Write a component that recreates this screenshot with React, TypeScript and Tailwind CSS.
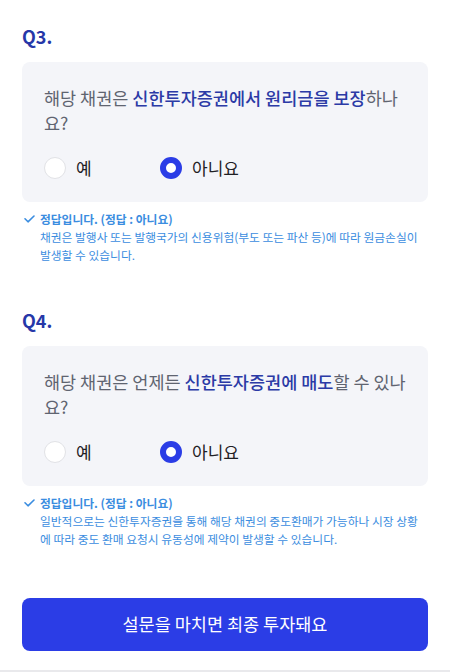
const font = { fontFamily: '"Noto Sans CJK KR", "Noto Sans", sans-serif' };

type Question = {
  label: string;
  parts: { text: string; strong?: boolean }[];
  answer: string;
  explain: string;
};

const questions: Question[] = [
  {
    label: 'Q3.',
    parts: [
      { text: '해당 채권은 ' },
      { text: '신한투자증권에서 원리금을 보장', strong: true },
      { text: '하나요?' },
    ],
    answer: '아니요',
    explain: '채권은 발행사 또는 발행국가의 신용위험(부도 또는 파산 등)에 따라 원금손실이 발생할 수 있습니다.',
  },
  {
    label: 'Q4.',
    parts: [
      { text: '해당 채권은 언제든 ' },
      { text: '신한투자증권에 매도', strong: true },
      { text: '할 수 있나요?' },
    ],
    answer: '아니요',
    explain:
      '일반적으로는 신한투자증권을 통해 해당 채권의 중도환매가 가능하나 시장 상황에 따라 중도 환매 요청시 유동성에 제약이 발생할 수 있습니다.',
  },
];

function Radio({ checked, label }: { checked: boolean; label: string }) {
  return (
    <div className="flex w-[116px] items-center gap-[10px]">
      {checked ? (
        <span className="h-[22px] w-[22px] rounded-full border-[6px] border-[#2b3de6] bg-white" />
      ) : (
        <span className="h-[22px] w-[22px] rounded-full border border-[#e1e2e6] bg-white" />
      )}
      <span className="text-[17px] leading-[22px] text-[#1f2024]">{label}</span>
    </div>
  );
}

function QuestionBlock({ q }: { q: Question }) {
  return (
    <section>
      <h2 className="mb-[14px] text-[18px] font-bold leading-[24px] text-[#2637a8]">{q.label}</h2>
      <div className="rounded-[8px] bg-[#f4f5f9] px-[22px] pb-[23px] pt-[23px]">
        <p className="text-[17.5px] leading-[25px] text-[#5f6470]">
          {q.parts.map((p, i) =>
            p.strong ? (
              <span key={i} className="font-medium text-[#2b3aa6]">
                {p.text}
              </span>
            ) : (
              <span key={i}>{p.text}</span>
            )
          )}
        </p>
        <div className="mt-[22px] flex">
          <Radio checked={false} label="예" />
          <Radio checked label="아니요" />
        </div>
      </div>
      <div className="mt-[8px] flex text-[11.75px] leading-[18px] text-[#3b8de0]">
        <svg className="mt-[5px] mr-[5px] h-[8px] w-[11px] shrink-0 ml-[2px]" viewBox="0 0 11 8" fill="none">
          <path d="M1 3.8 L4 6.8 L10 1" stroke="#3b8de0" strokeWidth="1.6" strokeLinecap="round" strokeLinejoin="round" />
        </svg>
        <div>
          <p className="font-bold">정답입니다. (정답 : {q.answer})</p>
          <p>{q.explain}</p>
        </div>
      </div>
    </section>
  );
}

export default function App() {
  return (
    <div className="min-h-[672px] bg-white" style={font}>
      <div className="px-[22px] pt-[24px]">
        <QuestionBlock q={questions[0]} />
        <div className="mt-[44px]">
          <QuestionBlock q={questions[1]} />
        </div>
        <button className="mt-[50px] flex h-[53px] w-full items-center justify-center rounded-[8px] bg-[#2b3de6] text-[17.5px] text-white">
          설문을 마치면 최종 투자돼요
        </button>
      </div>
      <div className="mt-[19px] h-[2px] bg-[#e9e9ec]" />
    </div>
  );
}
